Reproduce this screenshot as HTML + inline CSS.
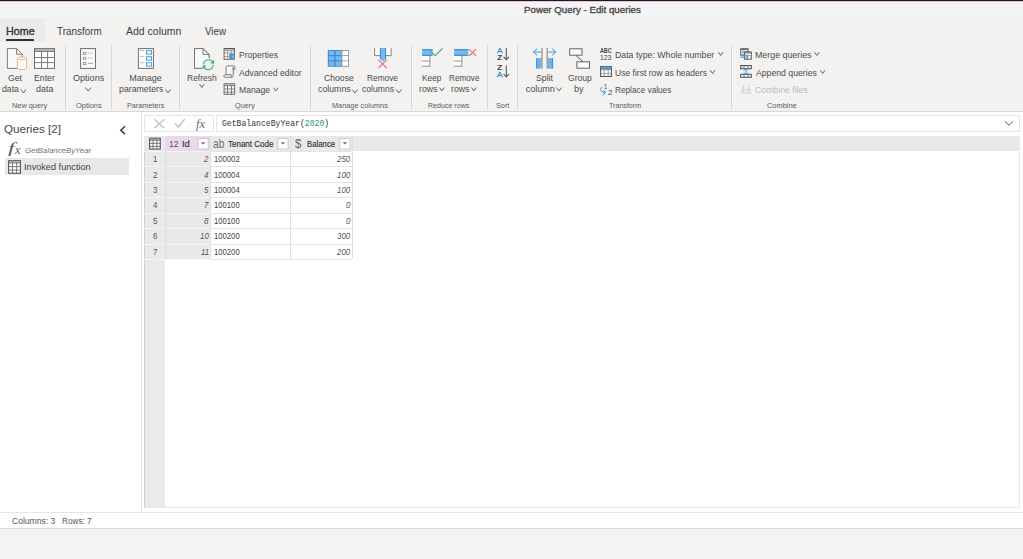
<!DOCTYPE html>
<html lang="en"><head><meta charset="utf-8"><title>Power Query - Edit queries</title>
<style>

html,body{margin:0;padding:0;background:#f3f3f3;}
body{width:1023px;height:559px;overflow:hidden;font-family:"Liberation Sans",sans-serif;}
#app{position:relative;width:1023px;height:559px;overflow:hidden;background:#f3f3f3;}
#app div{position:absolute;box-sizing:border-box;}
#ico{position:absolute;left:0;top:0;}
.t{position:absolute;white-space:pre;display:block;transform-origin:0 0;}
.sep{width:1px;top:45px;height:64px;background:#d8d6d4;}

</style></head><body>
<div id="app">

<div style="left:0;top:0;width:1023px;height:1px;background:#2d0c2e;"></div>
<div style="left:0;top:1px;width:1023px;height:1px;background:#d3ccd3;"></div>
<div style="left:0;top:2px;width:1023px;height:16px;background:#f4f4f4;"></div>
<div id="ribbon" style="left:0;top:18px;width:1023px;height:93px;background:#f3f2f1;"></div>
<div id="tabhome" style="left:0;top:19px;width:44.5px;height:22.5px;background:#edebe9;"></div>
<div style="left:6px;top:39.3px;width:28px;height:2.1px;background:#333;"></div>
<div style="left:0;top:110.5px;width:1023px;height:1.6px;background:linear-gradient(#d2d2d2,#dedede);"></div>
<div id="main" style="left:0;top:111.8px;width:1023px;height:400px;background:#fff;"></div>
<div class="sep" style="left:65px;"></div>
<div class="sep" style="left:111px;"></div>
<div class="sep" style="left:179px;"></div>
<div class="sep" style="left:309.6px;"></div>
<div class="sep" style="left:410.6px;"></div>
<div class="sep" style="left:487px;"></div>
<div class="sep" style="left:517px;"></div>
<div class="sep" style="left:731px;"></div>
<div id="qsel" style="left:5.2px;top:158.4px;width:124.3px;height:17px;background:#e8e8e8;"></div>
<div id="paneborder" style="left:141.2px;top:112px;width:1px;height:400px;background:#e3e3e3;"></div>
<div id="fxbtns" style="left:144.3px;top:115.2px;width:69.5px;height:16.6px;background:#fff;border:1px solid #e4e4e4;"></div>
<div id="fxinput" style="left:216.2px;top:115.2px;width:804px;height:16.6px;background:#fff;border:1px solid #e4e4e4;"></div>
<div id="grid" style="left:144px;top:135.5px;width:876.3px;height:372.4px;background:#fff;border:1px solid #e8e8e8;border-left-color:#d0d0d0;"></div>
<div id="ghead" style="left:144.3px;top:135.7px;width:875.6px;height:15.8px;background:#e9e9e9;"></div>
<div id="rownum" style="left:144.6px;top:135.7px;width:20.9px;height:371.8px;background:#eaeaea;"></div>
<div id="idcol" style="left:165.5px;top:151.3px;width:45.2px;height:108.2px;background:#e9e9e9;"></div>
<div id="idhead" style="left:165.5px;top:135.7px;width:45.2px;height:15.6px;background:#ecd8ec;"></div>
<div style="left:210.7px;top:150.80px;width:141.8px;height:1px;background:#e4e4e4;"></div>
<div style="left:144.3px;top:150.80px;width:66.4px;height:1px;background:#f4f4f4;"></div>
<div style="left:210.7px;top:166.26px;width:141.8px;height:1px;background:#e4e4e4;"></div>
<div style="left:144.3px;top:166.26px;width:66.4px;height:1px;background:#f4f4f4;"></div>
<div style="left:210.7px;top:181.72px;width:141.8px;height:1px;background:#e4e4e4;"></div>
<div style="left:144.3px;top:181.72px;width:66.4px;height:1px;background:#f4f4f4;"></div>
<div style="left:210.7px;top:197.18px;width:141.8px;height:1px;background:#e4e4e4;"></div>
<div style="left:144.3px;top:197.18px;width:66.4px;height:1px;background:#f4f4f4;"></div>
<div style="left:210.7px;top:212.64px;width:141.8px;height:1px;background:#e4e4e4;"></div>
<div style="left:144.3px;top:212.64px;width:66.4px;height:1px;background:#f4f4f4;"></div>
<div style="left:210.7px;top:228.10px;width:141.8px;height:1px;background:#e4e4e4;"></div>
<div style="left:144.3px;top:228.10px;width:66.4px;height:1px;background:#f4f4f4;"></div>
<div style="left:210.7px;top:243.56px;width:141.8px;height:1px;background:#e4e4e4;"></div>
<div style="left:144.3px;top:243.56px;width:66.4px;height:1px;background:#f4f4f4;"></div>
<div style="left:210.7px;top:259.02px;width:141.8px;height:1px;background:#e4e4e4;"></div>
<div style="left:144.3px;top:259.02px;width:66.4px;height:1px;background:#f4f4f4;"></div>
<div style="left:165.00px;top:135.7px;width:1px;height:123.8px;background:#dedede;"></div>
<div style="left:210.20px;top:135.7px;width:1px;height:123.8px;background:#dedede;"></div>
<div style="left:289.80px;top:135.7px;width:1px;height:123.8px;background:#dedede;"></div>
<div style="left:351.80px;top:135.7px;width:1px;height:123.8px;background:#dedede;"></div>
<div id="status" style="left:0;top:511.6px;width:1023px;height:17px;background:#fff;border-top:1px solid #e6e6e6;border-bottom:1px solid #dedede;"></div>
<div id="bottom" style="left:0;top:528.6px;width:1023px;height:31px;background:#f3f3f3;"></div>

<svg id="ico" width="1023" height="559" viewBox="0 0 1023 559">
<path d="M21 89.5L23.5 92.9L26 89.5" fill="none" stroke="#626262" stroke-width="1.0"/>
<path d="M85.5 87.6L88.25 91L91 87.6" fill="none" stroke="#626262" stroke-width="1.0"/>
<path d="M165.5 89.5L168.0 92.9L170.5 89.5" fill="none" stroke="#626262" stroke-width="1.0"/>
<path d="M199.5 84.2L201.85 87.5L204.2 84.2" fill="none" stroke="#626262" stroke-width="1.0"/>
<path d="M352.2 89.5L354.85 92.9L357.5 89.5" fill="none" stroke="#626262" stroke-width="1.0"/>
<path d="M396.2 89.5L398.85 92.9L401.5 89.5" fill="none" stroke="#626262" stroke-width="1.0"/>
<path d="M439.5 87.6L441.85 91L444.2 87.6" fill="none" stroke="#626262" stroke-width="1.0"/>
<path d="M471.5 87.6L473.85 91L476.2 87.6" fill="none" stroke="#626262" stroke-width="1.0"/>
<path d="M556.5 87.6L559.0 91L561.5 87.6" fill="none" stroke="#626262" stroke-width="1.0"/>
<path d="M273.5 87.8L275.75 91L278 87.8" fill="none" stroke="#626262" stroke-width="1.0"/>
<path d="M718.5 52.2L720.75 55.5L723 52.2" fill="none" stroke="#626262" stroke-width="1.0"/>
<path d="M710.2 70.2L712.6 73.5L715 70.2" fill="none" stroke="#626262" stroke-width="1.0"/>
<path d="M814.5 52.2L817.0 55.5L819.5 52.2" fill="none" stroke="#626262" stroke-width="1.0"/>
<path d="M820.2 70.2L822.6 73.5L825 70.2" fill="none" stroke="#626262" stroke-width="1.0"/>
<path d="M125 126.3L120.8 130.2L125 134.1" fill="none" stroke="#3c3c3c" stroke-width="1.5"/>
<path d="M154.4 119.2L164.2 128.2M164.2 119.2L154.4 128.2" fill="none" stroke="#c4c4c4" stroke-width="1.5"/>
<path d="M174.8 123.2L178.4 127L184.8 119" fill="none" stroke="#c4c4c4" stroke-width="1.5"/>
<path d="M1004.9 121.3L1009 125.2L1013.1 121.3" fill="none" stroke="#5a5a5a" stroke-width="1"/>
<rect x="198.1" y="138.4" width="10.099999999999994" height="10.6" fill="#fff" stroke="#c4c4c4" stroke-width="0.9"/>
<path d="M200.95 142.2H205.34999999999997L203.14999999999998 144.4Z" fill="#6a6a6a"/>
<rect x="277.8" y="138.4" width="10.300000000000011" height="10.6" fill="#fff" stroke="#c4c4c4" stroke-width="0.9"/>
<path d="M280.75000000000006 142.2H285.15000000000003L282.95000000000005 144.4Z" fill="#6a6a6a"/>
<rect x="339.7" y="138.4" width="10.400000000000034" height="10.6" fill="#fff" stroke="#c4c4c4" stroke-width="0.9"/>
<path d="M342.7 142.2H347.09999999999997L344.9 144.4Z" fill="#6a6a6a"/>
<path d="M7.4 48.6H16.6L22.2 54.2V68.4H7.4Z" fill="#f9f9f9" stroke="#6e6e6e" stroke-width="0.9" />
<path d="M16.6 48.6V54.2H22.2" fill="none" stroke="#6e6e6e" stroke-width="0.9" />
<path d="M17.4 58.4V68.2A4.6 1.5 0 0 0 26.6 68.2V58.4Z" fill="#fff" stroke="#f4a55c" stroke-width="0.9" />
<ellipse cx="22" cy="58.4" rx="4.6" ry="1.5" fill="#fff" stroke="#f4a55c" stroke-width="0.9"/>
<rect x="34.5" y="48.6" width="20" height="19.800000000000004" fill="#fff" stroke="#6e6e6e" stroke-width="1" />
<rect x="35" y="49.1" width="19" height="2.0" fill="#b3b1b0"/>
<path d="M41.5 51.1V68.4M47.6 51.1V68.4M34.5 51.5H54.5M34.5 57.5H54.5M34.5 62.6H54.5" fill="none" stroke="#707070" stroke-width="0.9" />
<rect x="80.6" y="48.6" width="14.9" height="19.8" fill="#fbfbfb" stroke="#6e6e6e" stroke-width="1" />
<rect x="83.5" y="52.3" width="2.4" height="2.1" fill="#fff" stroke="#8a8a8a" stroke-width="0.8" />
<path d="M88 53.099999999999994H92.8" fill="none" stroke="#c6c6c6" stroke-width="0.9" />
<rect x="83.5" y="57.3" width="2.4" height="2.1" fill="#fff" stroke="#8a8a8a" stroke-width="0.8" />
<path d="M88 58.099999999999994H92.8" fill="none" stroke="#c6c6c6" stroke-width="0.9" />
<rect x="83.5" y="62.5" width="2.4" height="2.1" fill="#fff" stroke="#8a8a8a" stroke-width="0.8" />
<path d="M88 63.3H92.8" fill="none" stroke="#9a9a9a" stroke-width="0.9" />
<rect x="138.4" y="48.6" width="15" height="19.8" fill="#fdfdfd" stroke="#6e6e6e" stroke-width="1" />
<rect x="146.4" y="50.6" width="5.1" height="3.5" fill="#f4faff" stroke="#4aa0e2" stroke-width="1" />
<path d="M140 50.6H144.2" fill="none" stroke="#aaa" stroke-width="0.8" />
<rect x="146.4" y="56.7" width="5.1" height="3.5" fill="#f4faff" stroke="#4aa0e2" stroke-width="1" />
<path d="M140 56.7H144.2" fill="none" stroke="#aaa" stroke-width="0.8" />
<rect x="146.4" y="62.7" width="5.1" height="3.5" fill="#f4faff" stroke="#4aa0e2" stroke-width="1" />
<path d="M140 62.7H144.2" fill="none" stroke="#aaa" stroke-width="0.8" />
<path d="M194.5 48.6H203L209 54.4V58.2M201.8 68.3H194.5V48.6" fill="none" stroke="#6e6e6e" stroke-width="0.9" />
<path d="M194.5 48.6H203L209 54.4V68.3H194.5Z" fill="#f9f9f9" stroke="none" stroke-width="1" />
<path d="M194.5 48.6H203L209 54.4V58M202 68.3H194.5V48.6" fill="none" stroke="#6e6e6e" stroke-width="0.9" />
<path d="M203 48.6V54.4H209" fill="none" stroke="#6e6e6e" stroke-width="0.9" />
<circle cx="208.3" cy="64.6" r="5.6" fill="#f3f2f1"/>
<path d="M203.5 64.6A4.9 4.9 0 0 1 212.4 61.8" fill="none" stroke="#38b26f" stroke-width="1.05" />
<path d="M213.2 64.8A4.9 4.9 0 0 1 204.2 67.4" fill="none" stroke="#38b26f" stroke-width="1.05" />
<path d="M214.1 59.6V63.6H210.2Z" fill="#38b26f" stroke="none" stroke-width="1" />
<path d="M202.5 69.4V65.6H206.4Z" fill="#38b26f" stroke="none" stroke-width="1" />
<rect x="224.1" y="48.6" width="10.400000000000006" height="10.699999999999996" fill="#fff" stroke="#5e5e5e" stroke-width="1" />
<rect x="224.6" y="49.1" width="9.400000000000006" height="1.6" fill="#c9c9c9"/>
<path d="M227.6 50.7V59.3M231.4 50.7V59.3M224.1 50.7H234.5M224.1 53H234.5M224.1 56.5H234.5" fill="none" stroke="#8c8c8c" stroke-width="0.8" />
<path d="M224 48.6H234.6" fill="none" stroke="#505050" stroke-width="1" />
<rect x="229.5" y="54.0" width="5" height="5.3" fill="#3a96dd" stroke="#8a8a8a" stroke-width="0.8" />
<path d="M231.6 56H233.8M232.2 57.6H233.8" fill="none" stroke="#cfe7fa" stroke-width="0.6" />
<path d="M226.1 74.8V67.4Q226.1 65.9 227.6 65.9H233.6Q235 65.9 235 67.4V69.3H233.2V67.4M233.2 67.4V75.6Q233.2 77.3 231.4 77.3H225.2Q223.8 77.3 223.8 76Q223.8 74.8 225.2 74.8H231.2Q231.2 77 231.4 77.3" fill="#fafafa" stroke="#6e6e6e" stroke-width="0.9" stroke-linejoin="round"/>
<rect x="224.1" y="83.7" width="10.599999999999994" height="10.599999999999994" fill="#fff" stroke="#6e6e6e" stroke-width="1" />
<rect x="224.6" y="84.2" width="9.599999999999994" height="1.2000000000000002" fill="#b0b0b0"/>
<path d="M227.5 85.4V94.3M231.5 85.4V94.3M224.1 85.6H234.7M224.1 89H234.7M224.1 92.1H234.7" fill="none" stroke="#707070" stroke-width="0.9" />
<rect x="327.8" y="50.1" width="14.1" height="16.6" fill="#2b88d8" stroke="none" stroke-width="1" />
<rect x="328.7" y="51" width="5.6" height="4.2" fill="#7ab8ea" stroke="none" stroke-width="1" />
<rect x="328.7" y="56.2" width="5.6" height="4.2" fill="#7ab8ea" stroke="none" stroke-width="1" />
<rect x="328.7" y="61.4" width="5.6" height="4.4" fill="#7ab8ea" stroke="none" stroke-width="1" />
<rect x="335.5" y="51" width="5.8" height="4.2" fill="#7ab8ea" stroke="none" stroke-width="1" />
<rect x="335.5" y="56.2" width="5.8" height="4.2" fill="#7ab8ea" stroke="none" stroke-width="1" />
<rect x="335.5" y="61.4" width="5.8" height="4.4" fill="#7ab8ea" stroke="none" stroke-width="1" />
<rect x="341.9" y="50.5" width="6.6" height="15.8" fill="#fff" stroke="#929292" stroke-width="0.9" />
<path d="M341.9 55.6H348.5M341.9 60.9H348.5" fill="none" stroke="#9a9a9a" stroke-width="0.9" />
<path d="M374.6 48.2V55.6H391.2V48.2" fill="#fafafa" stroke="#767676" stroke-width="0.9" />
<path d="M380 48V59.2L383 61.8L386 59.2V48Z" fill="#7ab8ea" stroke="none" stroke-width="1" />
<path d="M380.4 48V59M385.6 48V59" fill="none" stroke="#2b88d8" stroke-width="0.9" />
<path d="M378.4 59.8L386.8 68M386.8 59.8L378.4 68" fill="none" stroke="#e8737a" stroke-width="1.1" />
<rect x="422.1" y="49.1" width="10.5" height="6.8" fill="#7ab8ea" stroke="none" stroke-width="1" />
<path d="M422.1 49.7H432.6M422.1 55.3H432.6" fill="none" stroke="#2b88d8" stroke-width="1.1" />
<rect x="422.1" y="56" width="8" height="10.4" fill="#fff" stroke="none" stroke-width="1" />
<path d="M422.1 61H430.1M422.1 66.2H430.1M429.90000000000003 56V66.6" fill="none" stroke="#8e8e8e" stroke-width="1" />
<path d="M430.9 51.4L435.2 55.6L442.6 48.4" fill="none" stroke="#3db575" stroke-width="1.2" />
<rect x="454.1" y="49.1" width="14.299999999999955" height="6.8" fill="#7ab8ea" stroke="none" stroke-width="1" />
<path d="M454.1 49.7H468.4M454.1 55.3H468.4" fill="none" stroke="#2b88d8" stroke-width="1.1" />
<rect x="454.1" y="56" width="8" height="10.4" fill="#fff" stroke="none" stroke-width="1" />
<path d="M454.1 61H462.1M454.1 66.2H462.1M461.90000000000003 56V66.6" fill="none" stroke="#8e8e8e" stroke-width="1" />
<path d="M469.2 49.2L476 56M476 49.2L469.2 56" fill="none" stroke="#e8737a" stroke-width="1.1" />
<path d="M506.3 48.2V59.4M503.6 56.8L506.3 59.6L509 56.8" fill="none" stroke="#606060" stroke-width="1.15" />
<path d="M506.3 65.6V76.8M503.6 74.2L506.3 77L509 74.2" fill="none" stroke="#606060" stroke-width="1.15" />
<rect x="536.2" y="58.1" width="5.2" height="10.5" fill="#6fb1e8" stroke="none" stroke-width="1" />
<rect x="547.8" y="58.1" width="5.2" height="10.5" fill="#6fb1e8" stroke="none" stroke-width="1" />
<path d="M536.6 58.1V68.6M552.6 58.1V68.6" fill="none" stroke="#2b88d8" stroke-width="0.8" />
<path d="M542 47.9V68.6M547.2 47.9V68.6" fill="none" stroke="#969696" stroke-width="1.3" />
<path d="M541 52.1H533.4M537.3 48.7L533.4 52.1L537.3 55.5" fill="none" stroke="#3a96dd" stroke-width="1" />
<path d="M548.2 52.1H555.8M551.9 48.7L555.8 52.1L551.9 55.5" fill="none" stroke="#3a96dd" stroke-width="1" />
<rect x="569.7" y="48.8" width="12.3" height="6.4" fill="#fbfbfb" stroke="#646464" stroke-width="1" />
<rect x="576.9" y="61.8" width="12.6" height="6.4" fill="#fbfbfb" stroke="#646464" stroke-width="1" />
<path d="M576 55.4L582.8 61.6" fill="none" stroke="#4a4a4a" stroke-width="0.9" />
<rect x="600.55" y="66.64999999999999" width="10.9" height="9.800000000000006" fill="#fff" stroke="#5a5a5a" stroke-width="1.1" />
<path d="M604.2 66.1V76.45M608.2 66.1V76.45M600.55 69.8H611.45M600.55 73.4H611.45" fill="none" stroke="#8a8a8a" stroke-width="0.8" />
<rect x="601.1" y="67.2" width="9.8" height="2.4" fill="#3a96dd" stroke="none" stroke-width="1" />
<path d="M602.4 86.8Q598.6 89.6 602 91.6L605 92.9M602.6 95.2L605.6 92.9L603.4 90" fill="none" stroke="#3a96dd" stroke-width="1" />
<rect x="740.7" y="48.7" width="7.399999999999977" height="6.5" fill="#fff" stroke="#5a5a5a" stroke-width="1" />
<rect x="741.2" y="49.2" width="6.399999999999977" height="0.8" fill="#555"/>
<path d="M743 50.0V55.2M745.8 50.0V55.2M740.7 51.8H748.1" fill="none" stroke="#888" stroke-width="0.7" />
<rect x="744.4" y="52.0" width="6.899999999999977" height="7.200000000000003" fill="#fff" stroke="#5a5a5a" stroke-width="1" />
<rect x="744.9" y="52.5" width="5.899999999999977" height="0.8" fill="#555"/>
<path d="M747.8 53.3V59.2M744.4 55.6H751.3" fill="none" stroke="#888" stroke-width="0.7" />
<path d="M740.2 57.1H747.6M745.2 54.6L748 57.1L745.2 59.6" fill="none" stroke="#3a96dd" stroke-width="1" />
<rect x="740.75" y="65.55" width="10.49999999999991" height="3.1000000000000028" fill="#fff" stroke="#555" stroke-width="1.1" />
<rect x="741.3000000000001" y="66.1" width="9.39999999999991" height="0.09999999999999987" fill="#555"/>
<path d="M744 66.2V68.65M748 66.2V68.65" fill="none" stroke="#666" stroke-width="0.9" />
<rect x="740.75" y="74.35" width="10.49999999999991" height="2.9" fill="#fff" stroke="#555" stroke-width="1.1" />
<rect x="741.3000000000001" y="74.89999999999999" width="9.39999999999991" height="0.09999999999999987" fill="#555"/>
<path d="M744 75.0V77.25M748 75.0V77.25" fill="none" stroke="#666" stroke-width="0.9" />
<path d="M745.9 68.8V74.2M743.9 70.6L745.9 68.4L747.9 70.6M743.9 72.6L745.9 74.8L747.9 72.6" fill="none" stroke="#3a96dd" stroke-width="1" />
<path d="M743.2 85V91.2M741.2 89L743.2 91.4L745.2 89M748.6 85V91.2M746.6 89L748.6 91.4L750.6 89" fill="none" stroke="#a9d0f0" stroke-width="0.9" />
<path d="M740.6 93H751.8" fill="none" stroke="#c9c9c9" stroke-width="0.9" />
<rect x="8.65" y="160.75" width="11.8" height="12.500000000000023" fill="#fff" stroke="#505050" stroke-width="1.1" />
<rect x="9.2" y="161.29999999999998" width="10.7" height="1.2999999999999998" fill="#a8a8a8"/>
<path d="M12.5 162.6V173.25M16.6 162.6V173.25M8.65 162.9H20.45M8.65 166.6H20.45M8.65 170.1H20.45" fill="none" stroke="#6a6a6a" stroke-width="0.9" />
<rect x="149.65" y="138.25" width="10.600000000000017" height="10.800000000000006" fill="#fff" stroke="#505050" stroke-width="1.1" />
<rect x="150.2" y="138.79999999999998" width="9.500000000000018" height="1.1" fill="#a8a8a8"/>
<path d="M153.1 139.89999999999998V149.04999999999998M156.9 139.89999999999998V149.04999999999998M149.65 140.2H160.25M149.65 143.3H160.25M149.65 146.4H160.25" fill="none" stroke="#6a6a6a" stroke-width="0.9" />
</svg>
<span class="t" style="left:523.92px;top:5px;font-size:9.5px;line-height:9.5px;color:#484848;-webkit-text-stroke:0.35px;transform:scaleX(1.0243);">Power Query - Edit queries</span>
<span class="t" style="left:5.64px;top:26px;font-size:10.5px;line-height:10.5px;color:#333;-webkit-text-stroke:0.35px;transform:scaleX(1.0216);">Home</span>
<span class="t" style="left:57.00px;top:26px;font-size:10.5px;line-height:10.5px;color:#3b3b3b;transform:scaleX(0.9449);">Transform</span>
<span class="t" style="left:126.00px;top:26px;font-size:10.5px;line-height:10.5px;color:#3b3b3b;">Add column</span>
<span class="t" style="left:204.75px;top:26px;font-size:10.5px;line-height:10.5px;color:#3b3b3b;transform:scaleX(0.9280);">View</span>
<span class="t" style="left:8.07px;top:74px;font-size:9px;line-height:9px;color:#4c4c4c;transform:scaleX(0.9646);">Get</span>
<span class="t" style="left:2.15px;top:85px;font-size:9px;line-height:9px;color:#4c4c4c;transform:scaleX(0.9624);">data</span>
<span class="t" style="left:33.80px;top:74px;font-size:9px;line-height:9px;color:#4c4c4c;transform:scaleX(0.9683);">Enter</span>
<span class="t" style="left:35.64px;top:85px;font-size:9px;line-height:9px;color:#4c4c4c;transform:scaleX(0.9915);">data</span>
<span class="t" style="left:73.09px;top:74px;font-size:9px;line-height:9px;color:#4c4c4c;transform:scaleX(1.0071);">Options</span>
<span class="t" style="left:129.28px;top:74px;font-size:9px;line-height:9px;color:#4c4c4c;">Manage</span>
<span class="t" style="left:118.93px;top:85px;font-size:9px;line-height:9px;color:#4c4c4c;transform:scaleX(0.9745);">parameters</span>
<span class="t" style="left:186.82px;top:74px;font-size:9px;line-height:9px;color:#4c4c4c;transform:scaleX(0.9439);">Refresh</span>
<span class="t" style="left:323.57px;top:74px;font-size:9px;line-height:9px;color:#4c4c4c;transform:scaleX(0.9604);">Choose</span>
<span class="t" style="left:317.65px;top:85px;font-size:9px;line-height:9px;color:#4c4c4c;transform:scaleX(0.9741);">columns</span>
<span class="t" style="left:367.33px;top:74px;font-size:9px;line-height:9px;color:#4c4c4c;transform:scaleX(0.9246);">Remove</span>
<span class="t" style="left:362.15px;top:85px;font-size:9px;line-height:9px;color:#4c4c4c;transform:scaleX(0.9589);">columns</span>
<span class="t" style="left:422.33px;top:74px;font-size:9px;line-height:9px;color:#4c4c4c;transform:scaleX(0.9280);">Keep</span>
<span class="t" style="left:418.93px;top:85px;font-size:9px;line-height:9px;color:#4c4c4c;transform:scaleX(0.9674);">rows</span>
<span class="t" style="left:449.35px;top:74px;font-size:9px;line-height:9px;color:#4c4c4c;transform:scaleX(0.9092);">Remove</span>
<span class="t" style="left:450.93px;top:85px;font-size:9px;line-height:9px;color:#4c4c4c;transform:scaleX(0.9674);">rows</span>
<span class="t" style="left:536.11px;top:74px;font-size:9px;line-height:9px;color:#4c4c4c;transform:scaleX(0.9675);">Split</span>
<span class="t" style="left:525.64px;top:85px;font-size:9px;line-height:9px;color:#4c4c4c;">column</span>
<span class="t" style="left:567.57px;top:74px;font-size:9px;line-height:9px;color:#4c4c4c;transform:scaleX(0.9500);">Group</span>
<span class="t" style="left:574.41px;top:85px;font-size:9px;line-height:9px;color:#4c4c4c;transform:scaleX(1.0101);">by</span>
<span class="t" style="left:238.92px;top:51px;font-size:9px;line-height:9px;color:#4c4c4c;transform:scaleX(0.9499);">Properties</span>
<span class="t" style="left:239.40px;top:69px;font-size:9px;line-height:9px;color:#4c4c4c;transform:scaleX(0.9640);">Advanced editor</span>
<span class="t" style="left:238.81px;top:86px;font-size:9px;line-height:9px;color:#4c4c4c;transform:scaleX(0.9569);">Manage</span>
<span class="t" style="left:614.90px;top:51px;font-size:9px;line-height:9px;color:#4c4c4c;transform:scaleX(0.9723);">Data type: Whole number</span>
<span class="t" style="left:614.96px;top:69px;font-size:9px;line-height:9px;color:#4c4c4c;transform:scaleX(0.9476);">Use first row as headers</span>
<span class="t" style="left:614.94px;top:86px;font-size:9px;line-height:9px;color:#4c4c4c;transform:scaleX(0.9153);">Replace values</span>
<span class="t" style="left:754.79px;top:51px;font-size:9px;line-height:9px;color:#4c4c4c;transform:scaleX(0.9827);">Merge queries</span>
<span class="t" style="left:755.50px;top:69px;font-size:9px;line-height:9px;color:#4c4c4c;transform:scaleX(0.9645);">Append queries</span>
<span class="t" style="left:755.06px;top:86px;font-size:9px;line-height:9px;color:#bdbdbd;transform:scaleX(0.9670);">Combine files</span>
<span class="t" style="left:12.41px;top:102px;font-size:7.5px;line-height:7.5px;color:#5c5c5c;transform:scaleX(0.9787);">New query</span>
<span class="t" style="left:75.67px;top:102px;font-size:7.5px;line-height:7.5px;color:#5c5c5c;transform:scaleX(0.9906);">Options</span>
<span class="t" style="left:126.92px;top:102px;font-size:7.5px;line-height:7.5px;color:#5c5c5c;transform:scaleX(0.9627);">Parameters</span>
<span class="t" style="left:234.67px;top:102px;font-size:7.5px;line-height:7.5px;color:#5c5c5c;transform:scaleX(0.9701);">Query</span>
<span class="t" style="left:332.41px;top:102px;font-size:7.5px;line-height:7.5px;color:#5c5c5c;transform:scaleX(0.9778);">Manage columns</span>
<span class="t" style="left:428.43px;top:102px;font-size:7.5px;line-height:7.5px;color:#5c5c5c;transform:scaleX(0.9441);">Reduce rows</span>
<span class="t" style="left:496.17px;top:102px;font-size:7.5px;line-height:7.5px;color:#5c5c5c;transform:scaleX(0.9738);">Sort</span>
<span class="t" style="left:608.86px;top:102px;font-size:7.5px;line-height:7.5px;color:#5c5c5c;transform:scaleX(0.9470);">Transform</span>
<span class="t" style="left:767.13px;top:102px;font-size:7.5px;line-height:7.5px;color:#5c5c5c;transform:scaleX(0.9889);">Combine</span>
<span class="t" style="left:4.18px;top:124px;font-size:11.5px;line-height:11.5px;color:#484848;transform:scaleX(1.0115);">Queries [2]</span>
<span class="t" style="left:24.61px;top:147px;font-size:8px;line-height:8px;color:#707070;font-style:italic;transform:scaleX(0.9786);">GetBalanceByYear</span>
<span class="t" style="left:23.98px;top:163px;font-size:8.5px;line-height:8.5px;color:#444;transform:scaleX(1.0766);">Invoked function</span>
<span class="t" style="left:8.16px;top:141px;font-size:14.5px;line-height:14.5px;color:#5a5a5a;font-style:italic;font-family:'Liberation Serif', serif;transform:scaleX(1.6480);">f</span>
<span class="t" style="left:14.78px;top:144px;font-size:12px;line-height:12px;color:#5a5a5a;font-style:italic;font-family:'Liberation Serif', serif;transform:scaleX(1.0256);">x</span>
<span class="t" style="left:196.07px;top:118px;font-size:12px;line-height:12px;color:#6a6a6a;font-style:italic;font-family:'Liberation Serif', serif;transform:scaleX(1.0446);">fx</span>
<span class="t" style="left:221.73px;top:120px;font-size:8.5px;line-height:8.5px;color:#333;font-family:'Liberation Mono', monospace;transform:scaleX(0.9553);"><span>GetBalanceByYear(</span><span style="color:#2f9a6b">2020</span><span>)</span></span>
<span class="t" style="left:168.96px;top:139px;font-size:9.5px;line-height:9.5px;color:#555;transform:scaleX(0.8977);">12</span>
<span class="t" style="left:182.16px;top:140px;font-size:8.5px;line-height:8.5px;color:#383838;-webkit-text-stroke:0.18px;transform:scaleX(1.0992);">Id</span>
<span class="t" style="left:212.89px;top:138px;font-size:12.5px;line-height:12.5px;color:#707070;transform:scaleX(0.8155);">ab</span>
<span class="t" style="left:227.84px;top:140px;font-size:8.5px;line-height:8.5px;color:#383838;-webkit-text-stroke:0.18px;transform:scaleX(0.9416);">Tenant Code</span>
<span class="t" style="left:295.18px;top:137px;font-size:13.5px;line-height:13.5px;color:#686868;transform:scaleX(0.8526);">$</span>
<span class="t" style="left:307.38px;top:140px;font-size:8.5px;line-height:8.5px;color:#383838;-webkit-text-stroke:0.18px;transform:scaleX(0.9156);">Balance</span>
<span class="t" style="left:153.19px;top:155px;font-size:8.5px;line-height:8.5px;color:#555;transform:scaleX(0.9300);">1</span>
<span class="t" style="left:203.99px;top:155px;font-size:8.5px;line-height:8.5px;color:#555;font-style:italic;transform:scaleX(0.9300);">2</span>
<span class="t" style="left:213.62px;top:155px;font-size:8.5px;line-height:8.5px;color:#444;transform:scaleX(0.9050);">100002</span>
<span class="t" style="left:337.18px;top:155px;font-size:8.5px;line-height:8.5px;color:#555;font-style:italic;transform:scaleX(0.9300);">250</span>
<span class="t" style="left:153.31px;top:171px;font-size:8.5px;line-height:8.5px;color:#555;transform:scaleX(0.9300);">2</span>
<span class="t" style="left:204.19px;top:171px;font-size:8.5px;line-height:8.5px;color:#555;font-style:italic;transform:scaleX(0.9300);">4</span>
<span class="t" style="left:213.62px;top:171px;font-size:8.5px;line-height:8.5px;color:#444;transform:scaleX(0.9050);">100004</span>
<span class="t" style="left:337.18px;top:171px;font-size:8.5px;line-height:8.5px;color:#555;font-style:italic;transform:scaleX(0.9300);">100</span>
<span class="t" style="left:153.31px;top:186px;font-size:8.5px;line-height:8.5px;color:#555;transform:scaleX(0.9300);">3</span>
<span class="t" style="left:203.87px;top:186px;font-size:8.5px;line-height:8.5px;color:#555;font-style:italic;transform:scaleX(0.9300);">5</span>
<span class="t" style="left:213.62px;top:186px;font-size:8.5px;line-height:8.5px;color:#444;transform:scaleX(0.9050);">100004</span>
<span class="t" style="left:337.18px;top:186px;font-size:8.5px;line-height:8.5px;color:#555;font-style:italic;transform:scaleX(0.9300);">100</span>
<span class="t" style="left:153.33px;top:201px;font-size:8.5px;line-height:8.5px;color:#555;transform:scaleX(0.9300);">4</span>
<span class="t" style="left:203.64px;top:201px;font-size:8.5px;line-height:8.5px;color:#555;font-style:italic;transform:scaleX(0.9300);">7</span>
<span class="t" style="left:213.62px;top:201px;font-size:8.5px;line-height:8.5px;color:#444;transform:scaleX(0.9050);">100100</span>
<span class="t" style="left:345.95px;top:201px;font-size:8.5px;line-height:8.5px;color:#555;font-style:italic;transform:scaleX(0.9300);">0</span>
<span class="t" style="left:153.31px;top:217px;font-size:8.5px;line-height:8.5px;color:#555;transform:scaleX(0.9300);">5</span>
<span class="t" style="left:203.95px;top:217px;font-size:8.5px;line-height:8.5px;color:#555;font-style:italic;transform:scaleX(0.9300);">8</span>
<span class="t" style="left:213.62px;top:217px;font-size:8.5px;line-height:8.5px;color:#444;transform:scaleX(0.9050);">100100</span>
<span class="t" style="left:345.95px;top:217px;font-size:8.5px;line-height:8.5px;color:#555;font-style:italic;transform:scaleX(0.9300);">0</span>
<span class="t" style="left:153.27px;top:232px;font-size:8.5px;line-height:8.5px;color:#555;transform:scaleX(0.9300);">6</span>
<span class="t" style="left:199.56px;top:232px;font-size:8.5px;line-height:8.5px;color:#555;font-style:italic;transform:scaleX(0.9300);">10</span>
<span class="t" style="left:213.62px;top:232px;font-size:8.5px;line-height:8.5px;color:#444;transform:scaleX(0.9050);">100200</span>
<span class="t" style="left:337.18px;top:232px;font-size:8.5px;line-height:8.5px;color:#555;font-style:italic;transform:scaleX(0.9300);">300</span>
<span class="t" style="left:153.31px;top:248px;font-size:8.5px;line-height:8.5px;color:#555;transform:scaleX(0.9300);">7</span>
<span class="t" style="left:200.79px;top:248px;font-size:8.5px;line-height:8.5px;color:#555;font-style:italic;transform:scaleX(0.9300);">11</span>
<span class="t" style="left:213.62px;top:248px;font-size:8.5px;line-height:8.5px;color:#444;transform:scaleX(0.9050);">100200</span>
<span class="t" style="left:337.18px;top:248px;font-size:8.5px;line-height:8.5px;color:#555;font-style:italic;transform:scaleX(0.9300);">200</span>
<span class="t" style="left:12.17px;top:517px;font-size:8.5px;line-height:8.5px;color:#555;transform:scaleX(1.0047);">Columns: 3</span>
<span class="t" style="left:62.34px;top:517px;font-size:8.5px;line-height:8.5px;color:#555;transform:scaleX(0.9635);">Rows: 7</span>
<span class="t" style="left:496.90px;top:47px;font-size:7.2px;line-height:7.2px;color:#3a96dd;-webkit-text-stroke:0.35px;transform:scaleX(1.1278);">A</span>
<span class="t" style="left:496.84px;top:54px;font-size:7px;line-height:7px;color:#484848;font-weight:700;transform:scaleX(1.2613);">Z</span>
<span class="t" style="left:496.84px;top:64px;font-size:7px;line-height:7px;color:#484848;font-weight:700;transform:scaleX(1.2613);">Z</span>
<span class="t" style="left:496.90px;top:71px;font-size:7.2px;line-height:7.2px;color:#3a96dd;-webkit-text-stroke:0.35px;transform:scaleX(1.1278);">A</span>
<span class="t" style="left:599.87px;top:48px;font-size:6.5px;line-height:6.5px;color:#444;font-weight:700;transform:scaleX(0.8220);">ABC</span>
<span class="t" style="left:600.19px;top:54px;font-size:7px;line-height:7px;color:#444;transform:scaleX(0.9677);">123</span>
<span class="t" style="left:604.19px;top:83px;font-size:7px;line-height:7px;color:#444;transform:scaleX(0.7882);">1</span>
<span class="t" style="left:607.80px;top:89px;font-size:8px;line-height:8px;color:#444;transform:scaleX(0.9890);">2</span>
</div>
</body></html>
